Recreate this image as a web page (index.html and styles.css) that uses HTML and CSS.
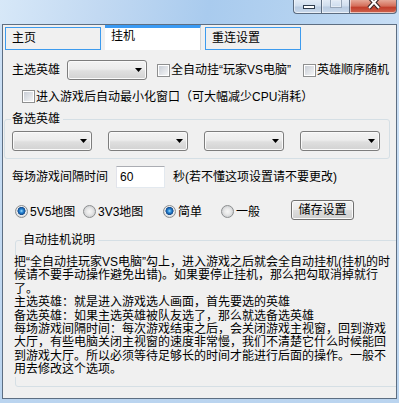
FILE: index.html
```html
<!DOCTYPE html>
<html lang="zh-CN">
<head>
<meta charset="utf-8">
<title>挂机</title>
<link rel="stylesheet" href="styles.css">
</head>
<body>
<div class="window">
  <div class="titlebar">
    <div class="caption">
      <div class="cbtn min"><span class="min-glyph"></span></div>
      <div class="cbtn max"><span class="max-glyph"></span></div>
      <div class="cbtn close">
        <svg class="x-glyph" width="16" height="10" viewBox="0 0 16 10">
          <path d="M3 -3 L13 8 M13 -3 L3 8" stroke="#3a2626" stroke-width="4.2" fill="none"/>
          <path d="M3 -3 L13 8 M13 -3 L3 8" stroke="#ffffff" stroke-width="2" fill="none"/>
        </svg>
      </div>
    </div>
  </div>
  <div class="client">
    <div class="tabs">
      <div class="tab">主页</div>
      <div class="tab active">挂机</div>
      <div class="tab">重连设置</div>
    </div>
    <div class="panel">
      <div class="row row-main">
        <span class="lbl">主选英雄</span>
        <div class="combo"><svg class="arrow" width="7" height="4" viewBox="0 0 7 4"><polygon points="0,0 7,0 3.5,4" fill="#000"/></svg></div>
        <label class="check check-auto"><span class="box"></span>全自动挂“玩家VS电脑”</label>
        <label class="check"><span class="box"></span>英雄顺序随机</label>
      </div>
      <div class="row row-min">
        <label class="check"><span class="box"></span>进入游戏后自动最小化窗口（可大幅减少CPU消耗）</label>
      </div>
      <fieldset class="group group-alt">
        <legend>备选英雄</legend>
        <div class="combos">
          <div class="combo"><svg class="arrow" width="7" height="4" viewBox="0 0 7 4"><polygon points="0,0 7,0 3.5,4" fill="#000"/></svg></div>
          <div class="combo"><svg class="arrow" width="7" height="4" viewBox="0 0 7 4"><polygon points="0,0 7,0 3.5,4" fill="#000"/></svg></div>
          <div class="combo"><svg class="arrow" width="7" height="4" viewBox="0 0 7 4"><polygon points="0,0 7,0 3.5,4" fill="#000"/></svg></div>
          <div class="combo"><svg class="arrow" width="7" height="4" viewBox="0 0 7 4"><polygon points="0,0 7,0 3.5,4" fill="#000"/></svg></div>
        </div>
      </fieldset>
      <div class="row row-interval">
        <span>每场游戏间隔时间</span>
        <input class="textbox" type="text" value="60">
        <span>秒(若不懂这项设置请不要更改)</span>
      </div>
      <div class="row row-radio">
        <label class="radio r1"><span class="dot on"></span>5V5地图</label>
        <label class="radio r2"><span class="dot"></span>3V3地图</label>
        <label class="radio r3"><span class="dot on"></span>简单</label>
        <label class="radio r4"><span class="dot"></span>一般</label>
        <button class="btn" type="button">储存设置</button>
      </div>
      <fieldset class="group group-help">
        <legend>自动挂机说明</legend>
        <p class="help">把“全自动挂玩家VS电脑”勾上，进入游戏之后就会全自动挂机(挂机的时候请不要手动操作避免出错)。如果要停止挂机，那么把勾取消掉就行<br>了。<br>主选英雄：就是进入游戏选人画面，首先要选的英雄<br>备选英雄：如果主选英雄被队友选了，那么就选备选英雄<br>每场游戏间隔时间：每次游戏结束之后，会关闭游戏主视窗，回到游戏大厅，有些电脑关闭主视窗的速度非常慢，我们不清楚它什么时候能回到游戏大厅。所以必须等待足够长的时间才能进行后面的操作。一般不用去修改这个选项。</p>
      </fieldset>
    </div>
  </div>
</div>
</body>
</html>
```
FILE: styles.css
```css
* { box-sizing: border-box; }
html, body { margin: 0; padding: 0; }
body {
  width: 399px;
  height: 403px;
  overflow: hidden;
  background: linear-gradient(#cfe2f6, #bad4ef);
  font: 12px/14px "Liberation Sans", "Noto Sans CJK SC", sans-serif;
  color: #000;
  text-spacing-trim: space-all;
}
.window {
  width: 399px;
  height: 403px;
  display: flex;
  flex-direction: column;
}
.titlebar {
  height: 24px;
  flex: none;
  display: flex;
  justify-content: flex-end;
  padding-right: 2px;
  background: linear-gradient(100deg, #d7e8f8 0%, #c2d9f2 25%, #a9cbee 52%, #b4d2f0 75%, #c8def5 100%);
}
.caption { display: flex; height: 14px; }
.cbtn {
  height: 14px;
  display: flex;
  justify-content: center;
  align-items: flex-start;
  border: 1px solid #5b6b7f;
  border-top: none;
  box-shadow: inset 0 -1px 0 rgba(255,255,255,0.6), inset 1px 0 0 rgba(255,255,255,0.5);
}
.cbtn.min, .cbtn.max {
  width: 28px;
  border-right: none;
  background: linear-gradient(#e2ebf6, #d0deee 45%, #b9cbe1 55%, #c9d9ec);
}
.cbtn.min { border-radius: 0 0 0 4px; }
.cbtn.close {
  width: 48px;
  border-radius: 0 0 4px 0;
  background: linear-gradient(#e6a898, #d5705c 45%, #c23f2c 58%, #cf6550);
}
.min-glyph {
  width: 12px;
  height: 4px;
  margin-top: 5px;
  margin-left: 2px;
  background: #fff;
  border: 1px solid #2e3b4c;
}
.max-glyph {
  width: 12px;
  height: 8px;
  border: 1px solid #97a6b8;
  border-top: none;
  box-shadow: inset 0 0 0 1px #e4ecf5;
}
.x-glyph { display: block; margin-left: 2px; }

.client {
  flex: none;
  margin: 0 2px;
  width: 395px;
  height: 375px;
  border: 1px solid #5d6e82;
  background: #f0f0f0;
  overflow: hidden;
  display: flex;
  flex-direction: column;
}
.tabs {
  flex: none;
  height: 25px;
  display: flex;
  align-items: flex-end;
  gap: 4px;
  padding-left: 2px;
}
.tab {
  width: 96px;
  height: 23px;
  border: 1px solid #3d9bee;
  background: #f0f0f0;
  padding-left: 6px;
  line-height: 21px;
}
.tab.active {
  height: 25px;
  background: #fff;
  border: none;
  border-top: 3px solid #3a9af3;
  border-right: 1px solid #d6d6d6;
  line-height: 16px;
}
.panel {
  flex: 1;
  display: flex;
  flex-direction: column;
  padding-left: 1px;
}
.row { display: flex; align-items: center; flex: none; }
.row-main { margin: 10px 0 0 8px; height: 20px; }
.row-main .lbl { margin-right: 7px; }
.row-min { margin: 9px 0 0 18px; height: 15px; }
.row-interval { margin: 7px 0 0 8px; height: 22px; }
.row-radio { margin: 12px 0 0 11px; height: 20px; }

.combo {
  width: 80px;
  height: 20px;
  flex: none;
  border: 1px solid #7d7d7d;
  border-radius: 3px;
  background: linear-gradient(#f3f3f3, #ececec 45%, #dfdfdf 55%, #d2d2d2);
  box-shadow: inset 0 0 0 1px #fafafa;
  display: flex;
  align-items: center;
  justify-content: flex-end;
  padding-right: 4px;
}
.arrow { display: block; }

.check { display: flex; align-items: center; gap: 1px; white-space: nowrap; }
.check-auto { width: 146px; margin-left: 10px; }
.box {
  width: 13px;
  height: 13px;
  flex: none;
  border: 1px solid #8e8f8f;
  padding: 1px;
  background: linear-gradient(135deg, #c9ced6, #f4f5f6) content-box, linear-gradient(#fff, #fff) padding-box;
}

.group {
  margin: 0;
  min-width: 0;
  border: 1px solid #d5dfe5;
  border-radius: 3px;
  flex: none;
}
.group legend {
  padding: 0 3px 0 1px;
  line-height: 14px;
}
.group-alt {
  width: 386px;
  margin-top: 8px;
  padding: 5px 7px 7px 7px;
}
.group-alt legend { margin-left: -1px; }
.combos { display: flex; gap: 16px; }

.textbox {
  width: 49px;
  height: 22px;
  margin: 0 8px;
  padding: 0 3px;
  font: inherit;
  color: #000;
  background: #fff;
  border: 1px solid;
  border-color: #abadb3 #e3e9ef #e3e9ef #e2e3ea;
  outline: none;
}

.radio { display: flex; align-items: center; gap: 2px; margin-top: 3px; white-space: nowrap; }
.r1 { width: 68px; }
.r2 { width: 80px; }
.r3 { width: 58px; }
.r4 { width: 70px; }
.dot {
  width: 13px;
  height: 13px;
  flex: none;
  border-radius: 50%;
  border: 1px solid #8c8e8f;
  background: radial-gradient(circle at 50% 50%, #f6f6f6 0, #e8e8e8 3px, #d2d4d6 5.5px);
}
.dot.on {
  background: radial-gradient(circle at 50% 45%, #a6defc 0, #2f8fdb 1.6px, #14569f 3.3px, #21518a 3.8px, #eef0f2 4.3px, #dcdfe2 5.5px);
}
.btn {
  width: 63px;
  height: 20px;
  padding: 0;
  font: inherit;
  color: #000;
  border: 1px solid #707070;
  border-radius: 3px;
  background: linear-gradient(#f2f2f2, #ebebeb 48%, #dddddd 52%, #cfcfcf);
  box-shadow: inset 0 0 0 1px #fbfbfb;
}

.group-help {
  width: 385px;
  margin: 13px 0 0 11px;
  padding: 9px 0 9px 0;
}
.group-help legend { margin-left: 6px; }
.help {
  margin: 0 0 0 -2px;
  width: 378px;
  background: #f0f0f0;
  line-height: 13.4px;
}
```
